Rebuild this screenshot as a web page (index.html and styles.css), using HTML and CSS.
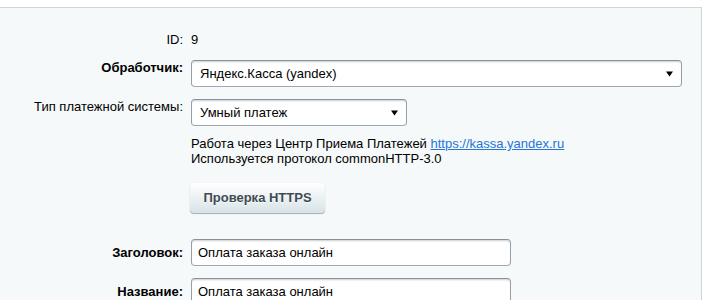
FILE: index.html
```html
<!DOCTYPE html>
<html lang="ru">
<head>
<meta charset="utf-8">
<title>Платежная система</title>
<link rel="stylesheet" href="styles.css">
</head>
<body>
<div class="panel">
  <div class="form">
    <div class="label">ID:</div>
    <div class="value">9</div>

    <div class="label bold top">Обработчик:</div>
    <div class="field">
      <div class="select wide">
        <span>Яндекс.Касса (yandex)</span>
        <svg class="arrow" width="7" height="6" viewBox="0 0 7 6"><path d="M0 0.5H7L3.5 5.5Z" fill="#000"/></svg>
      </div>
    </div>

    <div class="label top">Тип платежной системы:</div>
    <div class="field">
      <div class="select narrow">
        <span>Умный платеж</span>
        <svg class="arrow" width="7" height="6" viewBox="0 0 7 6"><path d="M0 0.5H7L3.5 5.5Z" fill="#000"/></svg>
      </div>
    </div>

    <div class="label"></div>
    <div class="info">
      <p>Работа через Центр Приема Платежей <a href="#">https://kassa.yandex.ru</a></p>
      <p>Используется протокол commonHTTP-3.0</p>
      <button class="btn" type="button">Проверка HTTPS</button>
    </div>

    <div class="label bold mid spaced">Заголовок:</div>
    <div class="field spaced">
      <div class="input">Оплата заказа онлайн</div>
    </div>

    <div class="label bold mid">Название:</div>
    <div class="field">
      <div class="input">Оплата заказа онлайн</div>
    </div>
  </div>
</div>
</body>
</html>
```

FILE: styles.css
```css
html, body {
  margin: 0;
  padding: 0;
  background: #ffffff;
}

body {
  font-family: "Liberation Sans", Arial, sans-serif;
  font-size: 13px;
  line-height: 16px;
  color: #000000;
  height: 300px;
  overflow: hidden;
}

.panel {
  margin-top: 7px;
  width: 701px;
  height: 320px;
  background: #f5f9f9;
  border-top: 1px solid #ced7d8;
  border-right: 1px solid #ced7d8;
}

.form {
  display: grid;
  grid-template-columns: 183px auto;
  column-gap: 8px;
  row-gap: 12px;
  padding-top: 24px;
}

.label {
  text-align: right;
  color: #000;
  white-space: nowrap;
}

.label.bold {
  font-weight: bold;
}

.label.top {
  align-self: start;
}

.label.mid {
  align-self: center;
}

.value {
  color: #000;
}

.field {
  display: flex;
}

.spaced {
  margin-top: 14px;
}

.select {
  box-sizing: border-box;
  height: 27px;
  display: flex;
  align-items: center;
  justify-content: space-between;
  padding: 0 8px 0 8px;
  background: #ffffff;
  border: 1px solid;
  border-color: #87919c #959ea9 #9ea7b1 #959ea9;
  border-radius: 4px;
  box-shadow: 0 1px 0 0 rgba(255,255,255,0.3), inset 0 2px 2px -1px rgba(180,188,191,0.7);
  color: #000;
}

.select.wide {
  width: 491px;
}

.select.narrow {
  width: 216px;
}

.arrow {
  display: block;
  flex: none;
}

.info {
  margin-top: -2px;
  line-height: 15px;
  color: #000;
}

.info p {
  margin: 0;
}

.info a {
  color: #2675d7;
  text-decoration: underline;
}

.btn {
  display: block;
  box-sizing: border-box;
  margin-top: 17px;
  margin-left: -1px;
  width: 135px;
  height: 30px;
  padding: 0 0 1px 0;
  border: none;
  border-radius: 4px;
  background-color: #e0e9ec;
  background-image: linear-gradient(to top, #d7e3e7, #ffffff);
  box-shadow: 0 0 1px rgba(0,0,0,0.11), 0 1px 1px rgba(0,0,0,0.3), inset 0 1px #fff, inset 0 0 1px rgba(255,255,255,0.5);
  font-family: "Liberation Sans", Arial, sans-serif;
  font-size: 13px;
  font-weight: bold;
  color: #3f4b54;
  text-shadow: 0 1px rgba(255,255,255,0.7);
}

.input {
  box-sizing: border-box;
  width: 320px;
  height: 27px;
  display: flex;
  align-items: center;
  padding: 0 6px;
  background: #ffffff;
  border: 1px solid;
  border-color: #87919c #959ea9 #9ea7b1 #959ea9;
  border-radius: 4px;
  box-shadow: 0 1px 0 0 rgba(255,255,255,0.3), inset 0 2px 2px -1px rgba(180,188,191,0.7);
  color: #000;
}
```
